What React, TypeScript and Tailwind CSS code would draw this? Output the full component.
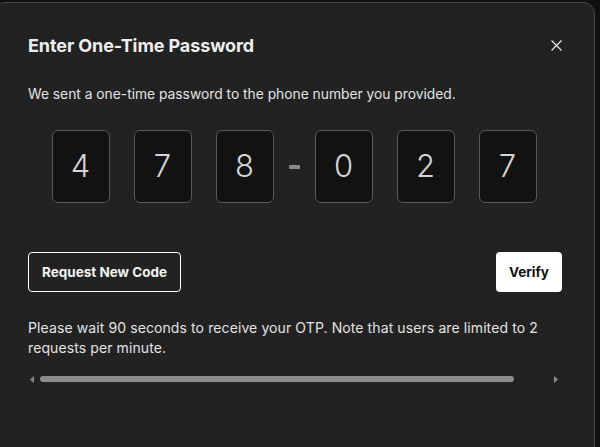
import React, { useState } from 'react';

const digits = ['4', '7', '8', '0', '2', '7'];

const DigitBox: React.FC<{ value: string }> = ({ value }) => (
  <div className="w-[58px] h-[73px] rounded-[6px] border border-[#5a5a5a] bg-[#121212] flex items-center justify-center text-[31px] font-light text-[#d4d4d4]">
    {value}
  </div>
);

const App: React.FC = () => {
  const [code] = useState(digits);

  return (
    <div className="w-[600px] h-[447px] overflow-hidden bg-[#101010] pt-[2px] font-['Inter',_'Liberation_Sans',_sans-serif]">
      <div className="w-[602px] h-[458px] -ml-[7px] rounded-[12px] border border-[#4a4a4a] bg-[#222222] pl-[34px] pr-[32px] pt-[30px]">
        <div className="flex items-center justify-between h-[24px]">
          <h1 className="text-[18px] font-bold text-[#ededed] tracking-[-0.1px]">Enter One-Time Password</h1>
          <button className="w-[12px] h-[12px] flex items-center justify-center text-[#e8e8e8]">
            <svg width="11" height="11" viewBox="0 0 11 11" fill="none" stroke="currentColor" strokeWidth="1.2">
              <path d="M0.5 0.5L10.5 10.5M10.5 0.5L0.5 10.5" />
            </svg>
          </button>
        </div>

        <p className="mt-[27px] text-[13.8px] leading-[20px] text-[#e2e2e2]">
          We sent a one-time password to the phone number you provided.
        </p>

        <div className="mt-[26px] pr-[2px] flex items-center justify-center">
          <div className="flex gap-[24px]">
            {code.slice(0, 3).map((d, i) => (
              <DigitBox key={i} value={d} />
            ))}
          </div>
          <div className="mx-[15px] w-[11px] h-[4px] rounded-[1px] bg-[#8a8a8a]" />
          <div className="flex gap-[24px]">
            {code.slice(3).map((d, i) => (
              <DigitBox key={i} value={d} />
            ))}
          </div>
        </div>

        <div className="mt-[49px] flex items-center justify-between">
          <button className="h-[40px] px-[13px] rounded-[4px] border border-white text-[13.5px] font-bold text-[#f2f2f2]">
            Request New Code
          </button>
          <button className="h-[40px] px-[13px] rounded-[4px] bg-white text-[13.5px] font-bold text-[#111]">
            Verify
          </button>
        </div>

        <p className="mt-[26px] text-[14px] leading-[20px] text-[#e2e2e2] tracking-[0.1px]">
          Please wait 90 seconds to receive your OTP. Note that users are limited to 2 requests per minute.
        </p>

        <div className="mt-[17px] flex items-center h-[8px]">
          <svg width="4" height="7" viewBox="0 0 4 7" className="ml-[2px] text-[#8a8a8a]">
            <path d="M4 0L0 3.5L4 7Z" fill="currentColor" />
          </svg>
          <div className="ml-[6px] w-[474px] h-[6px] rounded-full bg-[#8c8c8c]" />
          <div className="flex-1" />
          <svg width="4" height="7" viewBox="0 0 4 7" className="mr-[4px] text-[#8a8a8a]">
            <path d="M0 0L4 3.5L0 7Z" fill="currentColor" />
          </svg>
        </div>
      </div>
    </div>
  );
};

export default App;
